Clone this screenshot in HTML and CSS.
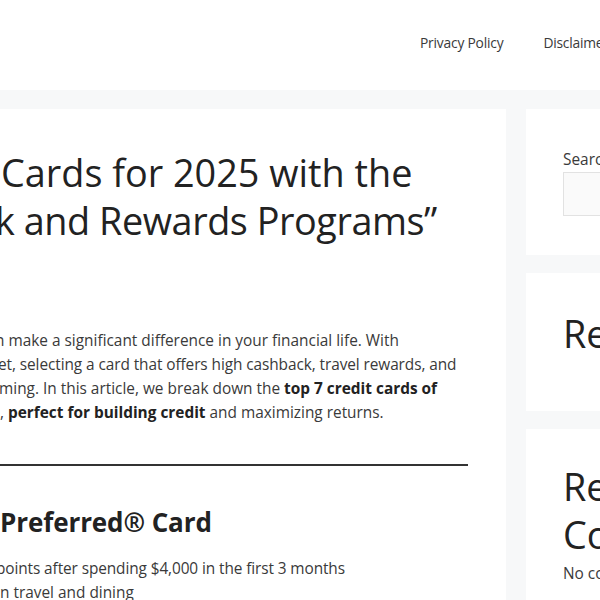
FILE: index.html
```html
<!DOCTYPE html>
<html>

<head>
    <link rel="stylesheet" href="styles.css">
</head>

<body>
    <header class="site-header">
        <nav class="main-nav">
            <ul>
                <li><a href="#">Privacy Policy</a></li>
                <li><a href="#">Disclaimer</a></li>
                <li><a href="#">Contact Us</a></li>
            </ul>
        </nav>
    </header>

    <div class="site-content">
        <main class="content-area">
            <article class="post">
                <h1 class="entry-title">
                    <span class="ln title-1">Cards for 2025 with the</span>
                    <span class="ln title-2">k and Rewards Programs&rdquo;</span>
                </h1>

                <p class="intro">
                    <span class="ln intro-1">n make a significant difference in your financial life. With</span>
                    <span class="ln intro-2">et, selecting a card that offers high cashback, travel rewards, and</span>
                    <span class="ln intro-3">ming. In this article, we break down the <strong>top 7 credit cards of</strong></span>
                    <span class="ln intro-4">, <strong>perfect for building credit</strong> and maximizing returns.</span>
                </p>

                <hr class="divider">

                <h2 class="card-title">Preferred&reg; Card</h2>

                <ul class="card-facts">
                    <li class="ln fact-1">points after spending $4,000 in the first 3 months</li>
                    <li class="ln fact-2">n travel and dining</li>
                </ul>
            </article>
        </main>

        <aside class="sidebar">
            <section class="widget widget-search">
                <label class="search-label" for="s">Search</label>
                <input class="search-field" id="s" type="search">
            </section>

            <section class="widget widget-posts">
                <h2 class="widget-title">Recent Posts</h2>
            </section>

            <section class="widget widget-comments">
                <h2 class="widget-title">Recent Comments</h2>
                <p class="no-comments">No comments to show.</p>
            </section>
        </aside>
    </div>
</body>

</html>
```
FILE: styles.css
```css
html,
body {
    margin: 0;
    overflow: hidden;
}

body {
    font-family: "Open Sans", "Noto Sans", sans-serif;
    font-size: 15.4px;
    line-height: 24px;
    color: #3a3a3a;
    background: #f7f8f9;
}

/* header */
.site-header {
    height: 90px;
    background: #fff;
}

.main-nav ul {
    display: flex;
    margin: 0;
    padding: 0 0 0 400px;
    list-style: none;
    white-space: nowrap;
}

.main-nav a {
    display: block;
    padding: 0 20px;
    font-size: 13.8px;
    letter-spacing: -0.2px;
    line-height: 85px;
    color: #3a3a3a;
    text-decoration: none;
}

/* layout */
.site-content {
    display: grid;
    grid-template-columns: 506px 300px;
    column-gap: 20px;
    padding-top: 19px;
    align-items: start;
}

.post {
    background: #fff;
    padding: 40px 38px 40px 0;
    height: 600px;
}

.ln {
    display: block;
    white-space: nowrap;
}

/* article */
.entry-title {
    margin: 0;
    font-size: 37.8px;
    line-height: 48px;
    font-weight: 400;
    color: #222;
}

.title-1 { margin-left: 1px; }
.title-2 { margin-left: -5px; letter-spacing: -0.45px; }

.intro {
    margin: 84px 0 0;
}

.intro strong {
    color: #222;
}

.intro-1 { margin-left: -5px; }
.intro-2 { margin-left: -2px; letter-spacing: -0.08px; }
.intro-3 { margin-left: -1px; }
.intro-4 { margin-left: 0; }

.divider {
    margin: 39px 0 0;
    border: 0;
    border-top: 2px solid #333;
}

.card-title {
    margin: 41px 0 0;
    font-size: 26px;
    line-height: 30px;
    font-weight: 700;
    letter-spacing: -0.1px;
    color: #222;
}

.card-facts {
    margin: 20px 0 0;
    padding: 0;
    list-style: none;
}

.fact-1 { margin-left: -4px; letter-spacing: -0.1px; }
.fact-2 { margin-left: 0; }

/* sidebar */
.sidebar {
    display: flex;
    flex-direction: column;
    gap: 18px;
}

.widget {
    background: #fff;
    padding: 35px 37px;
}

.widget-search {
    padding-top: 39px;
    padding-bottom: 39px;
}

.search-label {
    display: block;
}

.search-field {
    display: block;
    box-sizing: border-box;
    width: 100%;
    height: 44px;
    margin: 0;
    background: #fafafa;
    border: 1px solid #e2e2e2;
}

.widget-title {
    margin: 0;
    font-size: 37.8px;
    line-height: 48px;
    font-weight: 400;
    color: #222;
}

.widget-posts {
    padding-top: 37px;
}

.widget-posts .widget-title {
    margin-bottom: 18px;
}

.widget-comments {
    padding-top: 34px;
}

.widget-comments .widget-title {
    margin-bottom: 3px;
}

.no-comments {
    margin: 0;
}
```
